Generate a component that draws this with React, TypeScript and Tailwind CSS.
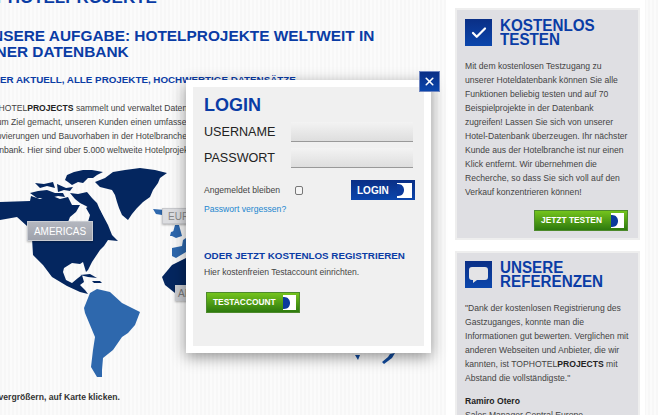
import { Check, X } from 'lucide-react'

const F = "font-['Liberation_Sans',Arial,sans-serif]"

function ArrowBox({ className }: { className: string }) {
  return (
    <span className={`flex items-center bg-white ${className}`}>
      <svg width="7" height="12" viewBox="0 0 7 12" className="shrink-0">
        <path d="M0 0h1c4 0 6 3 6 6s-2 6-6 6H0z" fill="#0b3a9c" />
      </svg>
    </span>
  )
}

function GreenButton({ label, className }: { label: string; className: string }) {
  return (
    <button className={`flex items-center justify-between h-[21px] border border-[#4d8a2c] bg-gradient-to-b from-[#74c41d] to-[#2d7a0e] text-white text-[8.4px] font-bold ${className}`}>
      {label}
      <ArrowBox className="w-[13px] h-[15px]" />
    </button>
  )
}

function SideTitle({ first, second, children }: { first: string; second: string; children: React.ReactNode }) {
  return (
    <div className="flex gap-2">
      <div className="w-[27px] h-[27px] mt-[1px] shrink-0 flex items-center justify-center bg-gradient-to-b from-[#0a2f86] to-[#0b46ac]">
        {children}
      </div>
      <h2 className="text-[17.2px] leading-[14px] font-bold text-[#0a3ca5] origin-left scale-x-[0.885] whitespace-nowrap">
        {first}
        <br />
        {second}
      </h2>
    </div>
  )
}

function WorldMap() {
  return (
    <svg width="446" height="230" viewBox="0 160 446 230" className="block">
      <g fill="#04265f">
        <path d="M0 202L30 201 31 196 40 199 50 195 60 199 68 197 72 205 80 205 76 212 70 217 68 222 78 221 88 222 90 215 86 208 92 204 100 210 108 225 112 235 118 241 108 240 104 246 100 250 92 262 88 270 86 272 83 262 80 264 72 263 64 268 63 272 66 280 72 283 78 278 82 275 84 282 80 285 85 290 88 294 80 292 67 286 52 277 43 265 33 255 32 238 27 226 17 217 0 220z" />
        <path d="M67 175L74 172 83 170 92 170 103 172 97 175 93 178 88 178 83 183 78 182 72 185 68 182 65 180z" />
        <path d="M35 183L44 184 53 182 55 188 47 186 40 188z" />
        <path d="M30 193L38 191 47 190 55 193 63 193 65 197 58 196 50 198 37 198z" />
        <path d="M70 193L78 194 87 192 92 198 97 203 100 210 103 217 96 212 92 210 86 206 80 203 75 199z" />
        <path d="M57 184L66 188 73 187 70 191 64 190 58 192z" />
        <path d="M95 182L105 178 113 172 125 170 140 168 155 170 167 173 160 178 158 183 153 190 150 197 143 202 137 208 132 214 128 220 122 215 119 208 117 202 115 195 112 190 100 187z" />
        <path d="M162 277L172 265 186 258 186 296 175 293 165 285z" />
        <path d="M80 275L90 274 97 278 88 277zM92 281L100 281 102 283 94 283z" />
      </g>
      <g fill="#2e68ad">
        <path d="M84 308L90 293 97 289 110 292 122 303 140 312 135 325 128 333 122 337 113 350 103 358 102 370 102 377 97 377 91 367 93 350 95 337 90 325 85 313z" />
        <path d="M153 209L165 210 162 215 156 214z" />
        <path d="M175 225L179 225 182 236 176 238 172 236z" />
        <path d="M171 232L174 231 174 236 170 236z" />
        <path d="M172 248L182 246 183 240 186 238 186 252 176 258 172 256z" />
      </g>
      <path d="M355 355h5l-2 5zM382 362l6-5 2-3 5-1-3 5-8 6z" fill="#114a9c" />
    </svg>
  )
}

export default function App() {
  return (
    <div className={`relative w-[658px] h-[415px] overflow-hidden flex text-[#444] ${F} bg-[repeating-linear-gradient(90deg,#f7f7f7_0,#f7f7f7_2px,#fbfbfb_2px,#fbfbfb_4px)]`}>
      <main className="w-[446px] shrink-0 overflow-hidden">
        <div className="w-[420px] -ml-[19px] -mt-[9px]">
          <p className="-ml-[8px] text-[17px] leading-[13px] font-bold text-[#0a3ca5] whitespace-nowrap">TOPHOTELPROJEKTE</p>
          <h1 className="mt-[24px] text-[15.4px] leading-[16px] font-bold text-[#0a3ca5]">
            UNSERE AUFGABE: HOTELPROJEKTE WELTWEIT IN EINER DATENBANK
          </h1>
          <h3 className="mt-[13px] text-[9.8px] leading-[14px] font-bold text-[#0a3ca5] whitespace-nowrap">
            IMMER AKTUELL, ALLE PROJEKTE, HOCHWERTIGE DATENSÄTZE
          </h3>
          <div className="mt-[14px] text-[8.6px] leading-[14px] whitespace-nowrap">
            <p>TOPHOTEL<b className="text-[#222]">PROJECTS</b> sammelt und verwaltet Daten über</p>
            <p>es zum Ziel gemacht, unseren Kunden einen umfassenden</p>
            <p>Renovierungen und Bauvorhaben in der Hotelbranche</p>
            <p>Datenbank. Hier sind über 5.000 weltweite Hotelprojekte</p>
          </div>
        </div>
        <div className="relative mt-[3px]">
          <WorldMap />
          <span className="absolute left-[27px] top-[61px] w-[66px] h-[20px] flex items-center justify-center bg-gradient-to-b from-[#b4b7bf] to-[#9da1ab] border border-[#c9ccd2] shadow-[0_1px_2px_rgba(0,0,0,0.3)] text-white text-[10px]">AMERICAS</span>
          <span className="absolute left-[162px] top-[48px] w-[40px] h-[16px] pl-[5px] flex items-center bg-[#dcdde0] border border-[#c8c9cd] shadow-[0_1px_2px_rgba(0,0,0,0.3)] text-[#888] text-[10px]">EUROPA</span>
          <span className="absolute left-[175px] top-[125px] w-[40px] h-[16px] pl-[3px] flex items-center bg-[#c9cbd0] shadow-[0_1px_2px_rgba(0,0,0,0.3)] text-[#777] text-[10px]">AFRIKA</span>
        </div>
        <p className="-ml-[22px] text-[8.6px] leading-[14px] font-bold text-[#333]">Zum vergrößern, auf Karte klicken.</p>
      </main>

      <aside className="w-[199px] h-full bg-white pl-[9px] pr-[5px] pt-[8px] flex flex-col gap-[11px] shrink-0">
        <section className="h-[232px] shrink-0 bg-[#dfdfe3] border-2 border-[#eeeeee] pl-[8px] pr-[6px] pt-[8px] flex flex-col">
          <SideTitle first="KOSTENLOS" second="TESTEN">
            <Check className="w-[18px] h-[18px] text-white" strokeWidth={3} />
          </SideTitle>
          <p className="mt-[13px] text-[8.6px] leading-[14px] whitespace-nowrap">
            Mit dem kostenlosen Testzugang zu
            <br />
            unserer Hoteldatenbank können Sie alle
            <br />
            Funktionen beliebig testen und auf 70
            <br />
            Beispielprojekte in der Datenbank
            <br />
            zugreifen! Lassen Sie sich von unserer
            <br />
            Hotel-Datenbank überzeugen. Ihr nächster
            <br />
            Kunde aus der Hotelbranche ist nur einen
            <br />
            Klick entfernt. Wir übernehmen die
            <br />
            Recherche, so dass Sie sich voll auf den
            <br />
            Verkauf konzentrieren können!
          </p>
          <GreenButton label="JETZT TESTEN" className="self-end w-[94px] mt-[11px] mr-[4px] pl-[6px] pr-[3px]" />
        </section>
        <section className="h-[200px] shrink-0 bg-[#dfdfe3] border-2 border-[#eeeeee] pl-[8px] pr-[6px] pt-[7px]">
          <SideTitle first="UNSERE" second="REFERENZEN">
            <svg width="19" height="16" viewBox="0 0 19 16">
              <path d="M3 0h13a3 3 0 0 1 3 3v7a3 3 0 0 1-3 3H8l-4 3v-3H3a3 3 0 0 1-3-3V3a3 3 0 0 1 3-3z" fill="#e4e4e6" />
            </svg>
          </SideTitle>
          <p className="mt-[13px] text-[8.6px] leading-[14px] whitespace-nowrap">
            "Dank der kostenlosen Registrierung des
            <br />
            Gastzuganges, konnte man die
            <br />
            Informationen gut bewerten. Verglichen mit
            <br />
            anderen Webseiten und Anbieter, die wir
            <br />
            kannten, ist TOPHOTEL<b className="text-[#222]">PROJECTS</b> mit
            <br />
            Abstand die vollständigste."
          </p>
          <p className="mt-[9px] text-[8.6px] leading-[14px] font-bold text-[#222]">Ramiro Otero</p>
          <p className="text-[8.6px] leading-[14px]">Sales Manager Central Europe</p>
        </section>
      </aside>

      <div className="absolute left-[186px] top-[80px] w-[245px] h-[273px] bg-white p-[7px] shadow-[0_4px_14px_rgba(0,0,0,0.42)]">
        <div className="h-full bg-[#f0f0f0] pl-[11px] pr-[9px] pt-[6px]">
          <h2 className="text-[18px] leading-[24px] font-bold text-[#0a3ca5]">LOGIN</h2>
          <div className="mt-[5px] flex items-center justify-between h-[20px] pr-[2px]">
            <label className="text-[12.6px] text-[#222]">USERNAME</label>
            <span className="w-[122px] h-[20px] bg-gradient-to-b from-[#f3f3f3] to-[#dedede] border-b border-[#999]" />
          </div>
          <div className="mt-[6px] flex items-center justify-between h-[20px] pr-[2px]">
            <label className="text-[12.6px] text-[#222]">PASSWORT</label>
            <span className="w-[122px] h-[20px] bg-gradient-to-b from-[#f3f3f3] to-[#dedede] border-b border-[#999]" />
          </div>
          <div className="mt-[12px] flex items-center h-[20px] text-[8.6px]">
            <span className="w-[91px]">Angemeldet bleiben</span>
            <span className="w-[8px] h-[9px] rounded-[2px] border border-[#777] bg-[#f5f5f5]" />
            <button className="ml-auto w-[64px] h-[20px] pl-[6px] pr-[3px] flex items-center justify-between bg-gradient-to-b from-[#0a2f86] to-[#0b46ac] text-white text-[10px] font-bold">
              LOGIN
              <ArrowBox className="w-[15px] h-[15px]" />
            </button>
          </div>
          <a className="block mt-[2px] text-[8.6px] leading-[14px] text-[#1c86cf]">Passwort vergessen?</a>
          <h3 className="mt-[33px] text-[9.8px] leading-[14px] font-bold text-[#0a3ca5] whitespace-nowrap">ODER JETZT KOSTENLOS REGISTRIEREN</h3>
          <p className="mt-[2px] text-[8.6px] leading-[14px]">Hier kostenfreien Testaccount einrichten.</p>
          <GreenButton label="TESTACCOUNT" className="w-[94px] mt-[13px] ml-[2px] pl-[6px] pr-[3px]" />
        </div>
      </div>
      <button className="absolute left-[419px] top-[71px] w-[21px] h-[21px] flex items-center justify-center bg-gradient-to-b from-[#0a2f86] to-[#0b46ac] border border-[#6f86c0]">
        <X className="w-[13px] h-[13px] text-white" strokeWidth={3} />
      </button>
    </div>
  )
}
